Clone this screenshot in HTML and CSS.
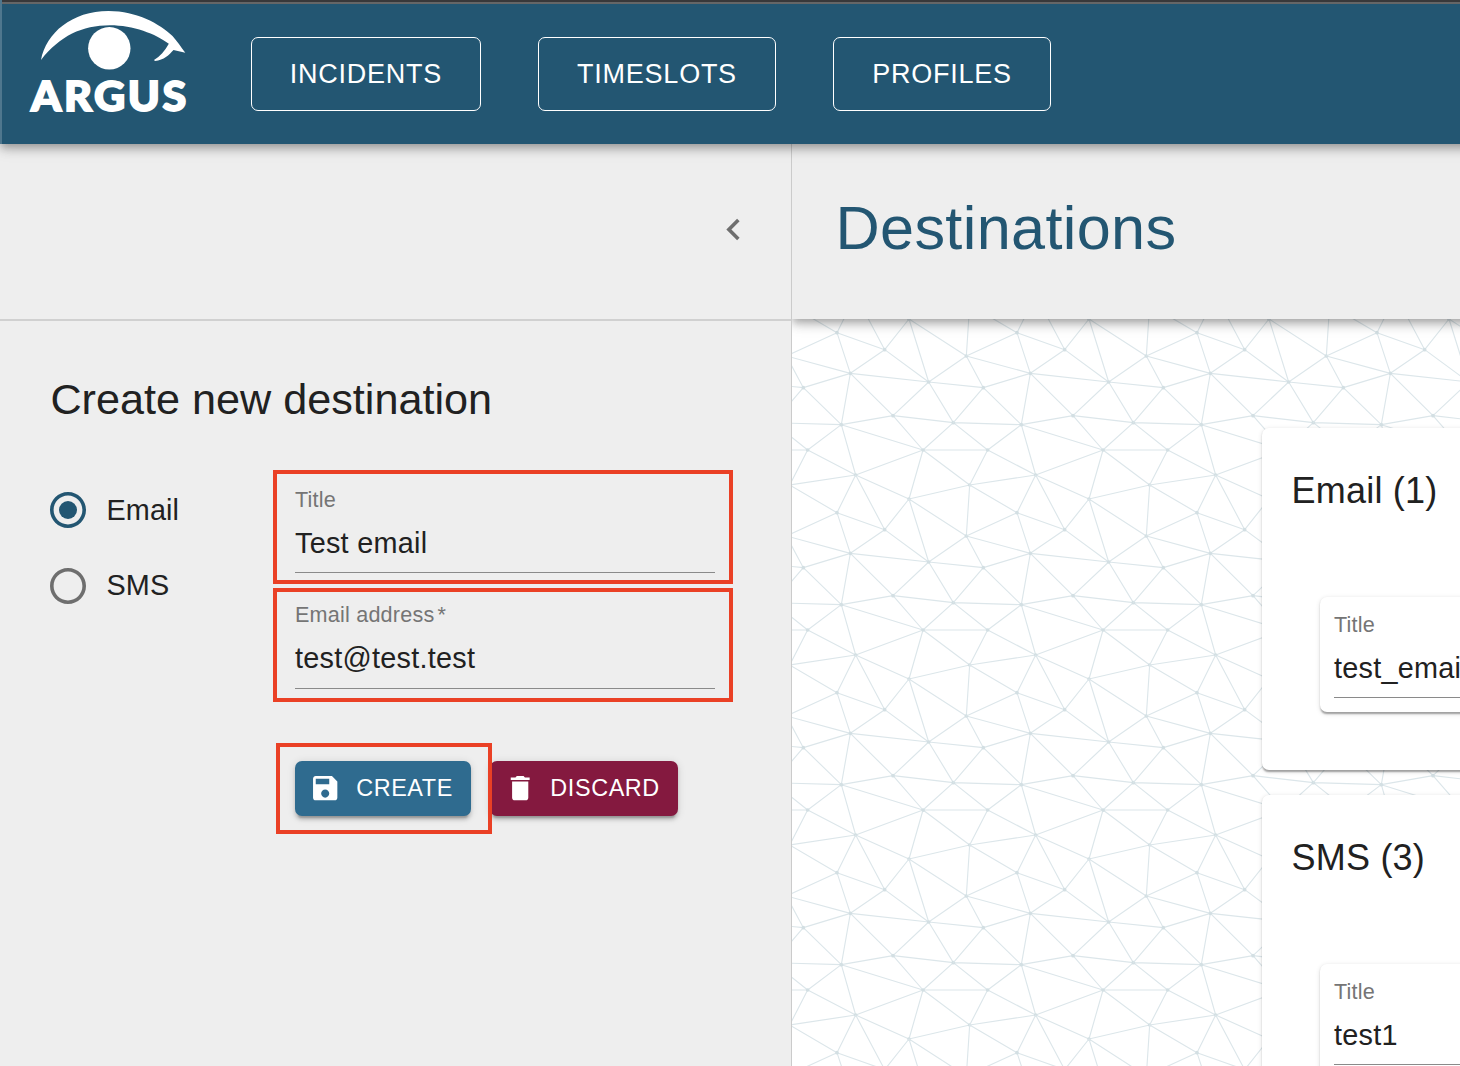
FILE: index.html
```html
<!DOCTYPE html>
<html lang="en">
<head>
<meta charset="utf-8">
<title>Argus - Destinations</title>
<link rel="stylesheet" href="styles.css">
</head>
<body>
<div class="app">
  <header class="appbar">
    <svg class="logo" width="164" height="110" viewBox="26 8 164 110" role="img" aria-label="Argus">
      <path d="M41 60C46 33 72 11 108.500 11C137 11 160 24 172.500 36C177 41 181 47 185.300 52.800L173.500 50C169 55 164 60 155 61L154 60C160 56.500 165 51 168.800 43.800C156 34 133 25.300 110 25.300C82 25.300 60 36 41 60Z"/>
      <circle cx="109.300" cy="48.300" r="21.200"/>
      <text class="logo-text" x="31" y="111" textLength="158" lengthAdjust="spacingAndGlyphs">ARGUS</text>
    </svg>
    <nav class="nav">
      <a class="nav-button nav-incidents">INCIDENTS</a>
      <a class="nav-button nav-timeslots">TIMESLOTS</a>
      <a class="nav-button nav-profiles">PROFILES</a>
    </nav>
  </header>

  <div class="content">
    <aside class="sidebar">
      <div class="sidebar-top">
        <svg class="chevron" viewBox="0 0 24 24"><path d="M15.410 7.410 14 6l-6 6 6 6 1.410-1.410L10.830 12z"/></svg>
      </div>
      <div class="sidebar-body">
        <h2 class="form-title">Create new destination</h2>
        <form class="form">
          <div class="radios">
            <label class="radio">
              <svg class="radio-icon radio-checked" viewBox="2 2 20 20"><path d="M12 2C6.480 2 2 6.480 2 12s4.480 10 10 10 10-4.480 10-10S17.520 2 12 2zm0 18c-4.420 0-8-3.580-8-8s3.580-8 8-8 8 3.580 8 8-3.580 8-8 8z"/><circle cx="12" cy="12" r="5"/></svg>
              <span>Email</span>
            </label>
            <label class="radio">
              <svg class="radio-icon" viewBox="2 2 20 20"><path d="M12 2C6.480 2 2 6.480 2 12s4.480 10 10 10 10-4.480 10-10S17.520 2 12 2zm0 18c-4.420 0-8-3.580-8-8s3.580-8 8-8 8 3.580 8 8-3.580 8-8 8z"/></svg>
              <span>SMS</span>
            </label>
          </div>
          <div class="fields">
            <div class="field highlight">
              <div class="field-label">Title</div>
              <div class="field-input">Test email</div>
            </div>
            <div class="field field-required highlight">
              <div class="field-label">Email address<span class="star">*</span></div>
              <div class="field-input">test@test.test</div>
            </div>
            <div class="actions">
              <div class="action-create">
                <button type="button" class="button button-create">
                  <svg class="button-icon" viewBox="0 0 24 24"><path d="M17 3H5c-1.110 0-2 .9-2 2v14c0 1.100.890 2 2 2h14c1.100 0 2-.9 2-2V7l-4-4zm-5 16c-1.660 0-3-1.340-3-3s1.340-3 3-3 3 1.340 3 3-1.340 3-3 3zm3-10H5V5h10v4z"/></svg>
                  CREATE
                </button>
              </div>
              <button type="button" class="button button-discard">
                <svg class="button-icon" viewBox="0 0 24 24"><path d="M6 19c0 1.100.9 2 2 2h8c1.100 0 2-.9 2-2V7H6v12zM19 4h-3.500l-1-1h-5l-1 1H5v2h14V4z"/></svg>
                DISCARD
              </button>
            </div>
          </div>
        </form>
      </div>
    </aside>

    <main class="main">
      <svg class="mesh" width="668" height="922" viewBox="792 144 668 922" aria-hidden="true">
        <defs>
          <g id="net">
            <path class="mesh-line" d="M141 68L284 119M141 68L181 190M141 68L-11 138M141 68L-1 -15M141 68L197 -45M284 119L181 190M284 119L416 216M284 119L357 27M284 119L197 -45M529 138L357 27M529 138L416 216M529 138L580 233M529 138L721 190M529 138L539 -15M181 190L416 216M181 190L40 233M181 190L309 317M181 190L154 344M416 216L357 27M416 216L309 317M416 216L490 338M416 216L580 233M40 233L154 344M40 233L-50 338M309 317L154 344M309 317L399 420M309 317L490 338M490 338L399 420M490 338L593 420M490 338L694 344M154 344L399 420M154 344L53 420M154 344L197 495M399 420L593 420M399 420L197 495M399 420L539 525M399 420L357 567M53 420L197 495M53 420L-1 525M197 495L357 567M197 495L-1 525M539 525L357 567"/>
            <path class="mesh-dot" d="M141 68h0M284 119h0M529 138h0M181 190h0M416 216h0M40 233h0M309 317h0M490 338h0M154 344h0M399 420h0M53 420h0M197 495h0M539 525h0M357 567h0"/>
          </g>
          <g id="net-row">
            <use href="#net" x="-540"/><use href="#net"/><use href="#net" x="540"/><use href="#net" x="1080"/><use href="#net" x="1620"/>
          </g>
        </defs>
        <g transform="translate(790 310) scale(.33333333)">
          <use href="#net-row" y="-540"/><use href="#net-row"/><use href="#net-row" y="540"/><use href="#net-row" y="1080"/><use href="#net-row" y="1620"/><use href="#net-row" y="2160"/>
        </g>
      </svg>
      <div class="page-head"><h1 class="page-title">Destinations</h1></div>
      <div class="cards">
        <section class="card">
          <h3 class="card-title">Email (1)</h3>
          <div class="item">
            <div class="field-label">Title</div>
            <div class="field-input">test_email</div>
          </div>
        </section>
        <section class="card">
          <h3 class="card-title">SMS (3)</h3>
          <div class="item">
            <div class="field-label">Title</div>
            <div class="field-input">test1</div>
          </div>
        </section>
      </div>
    </main>
  </div>
</div>
</body>
</html>
```
FILE: styles.css
```css
*, *::after { box-sizing: border-box; }
body {
  margin: 0;
  font-family: "Liberation Sans", Arial, Helvetica, sans-serif;
  color: #212121;
  background: #eee;
}
h1, h2, h3 { margin: 0; font-weight: 400; }

.app { height: 1066px; overflow: hidden; display: flex; flex-direction: column; }

.appbar {
  position: relative;
  z-index: 2;
  flex: none;
  height: 144px;
  margin-right: -20px;
  display: flex;
  align-items: flex-start;
  padding: 4px 0 0 24px;
  border-left: 2px solid #4f778e;
  background: linear-gradient(#38383a 0 2px, #656667 2px 4px, #235672 4px);
  box-shadow: 0 3.6px 7.2px -1.8px rgba(0,0,0,.2), 0 7.2px 9px rgba(0,0,0,.14), 0 1.8px 18px rgba(0,0,0,.12);
}
.logo { flex: none; margin-top: 4px; fill: #fff; overflow: visible; }
.logo-text {
  font: 900 41px Lato, "Open Sans", sans-serif;
  letter-spacing: 2.500px;
  stroke: #fff;
  stroke-width: 1.800px;
}
.nav { display: flex; gap: 57px; margin: 33px 0 0 61px; }
.nav-button {
  display: flex;
  align-items: center;
  justify-content: center;
  height: 74px;
  border: 1px solid #fff;
  border-radius: 7px;
  color: #fff;
  font-size: 27px;
  letter-spacing: .75px;
}
.nav-incidents { width: 230px; }
.nav-timeslots { width: 238px; }
.nav-profiles { width: 218px; }

.content { flex: 1; min-height: 0; display: flex; }

.sidebar { flex: none; width: 792px; border-right: 1px solid #cbcbcb; background: #eee; }
.sidebar-top {
  height: 177px;
  display: flex;
  align-items: center;
  justify-content: flex-end;
  padding: 0 36.500px 5px 0;
  border-bottom: 2px solid #d0d0d0;
}
.chevron { width: 43px; height: 43px; fill: #6e6e6e; }
.sidebar-body { padding: 52px 50px 0 50.400px; }
.form-title { font-size: 43.2px; line-height: 52px; }
.form { display: flex; margin-top: 47px; }
.radios { width: 244.600px; flex: none; padding-top: .6px; }
.radio { display: flex; align-items: center; gap: 20px; height: 75.600px; font-size: 28.8px; letter-spacing: .15px; }
.radio-icon { width: 36px; height: 36px; fill: #6e6e6e; }
.radio-checked { fill: #235672; }

.fields { width: 420px; flex: none; padding-top: 14px; }
.field + .field { margin-top: 28px; }
.field-label { height: 27px; line-height: 27px; font-size: 21.600px; letter-spacing: .2px; color: #757575; }
.star { margin-left: 3px; }
.field-input {
  height: 60px;
  line-height: 60px;
  border-bottom: 1px solid #8a8a8a;
  font-size: 28.8px;
  letter-spacing: .27px;
  white-space: nowrap;
}
.field-required .field-input { height: 61px; }

.highlight, .action-create { position: relative; }
.highlight::after, .action-create::after {
  content: "";
  position: absolute;
  z-index: 1;
  border: 4px solid #ea4025;
  pointer-events: none;
}
.highlight::after { top: -16px; left: -22px; width: 460px; height: 114px; }
.field-required::after { top: -13px; }
.action-create::after { top: -18px; left: -19px; width: 216px; height: 91px; }

.actions { display: flex; gap: 19px; margin-top: 72px; }
.button {
  display: flex;
  align-items: center;
  gap: 14.400px;
  height: 55px;
  padding: 0 0 0 14.400px;
  border: 0;
  border-radius: 7px;
  color: #fff;
  font: 23.400px "Liberation Sans", Arial, sans-serif;
  letter-spacing: .6px;
  box-shadow: 0 5.400px 1.800px -3.600px rgba(0,0,0,.2), 0 3.600px 3.600px rgba(0,0,0,.14), 0 1.800px 9px rgba(0,0,0,.12);
}
.button-icon { width: 32.400px; height: 32.400px; fill: #fff; }
.button-create { width: 176px; background: #2f6b8f; }
.button-discard { width: 188px; gap: 13.600px; background: #84193f; }

.main { position: relative; flex: 1; min-width: 0; overflow: hidden; background: #fff; }
.mesh { position: absolute; top: 0; left: 0; }
.mesh-line { fill: none; stroke: #dce6ea; stroke-width: 3.400; }
.mesh-dot { fill: none; stroke: #d3dfe3; stroke-width: 11; stroke-linecap: round; }
.page-head {
  position: relative;
  display: flex;
  align-items: center;
  height: 175px;
  margin-right: -20px;
  padding: 0 0 7px 43.500px;
  background: #eee;
  box-shadow: 0 3.6px 7.2px -1.8px rgba(0,0,0,.2), 0 7.2px 9px rgba(0,0,0,.14), 0 1.8px 18px rgba(0,0,0,.12);
}
.page-title { font-size: 61.200px; letter-spacing: .35px; color: #235672; }
.cards { position: relative; display: flex; flex-direction: column; gap: 25px; padding: 109px 0 0 470px; }
.card, .item {
  background: #fff;
  box-shadow: 0 3.600px 1.800px -1.800px rgba(0,0,0,.2), 0 1.800px 1.800px rgba(0,0,0,.14), 0 1.800px 5.400px rgba(0,0,0,.12);
}
.card { width: 520px; height: 342px; padding: 41px 0 0 29px; border-radius: 7px; }
.card-title { margin-left: .6px; font-size: 36px; line-height: 44px; letter-spacing: .2px; }
.item { width: 430px; height: 115px; margin: 84px 0 0 29px; padding: 14px; border-radius: 7px; }
```
